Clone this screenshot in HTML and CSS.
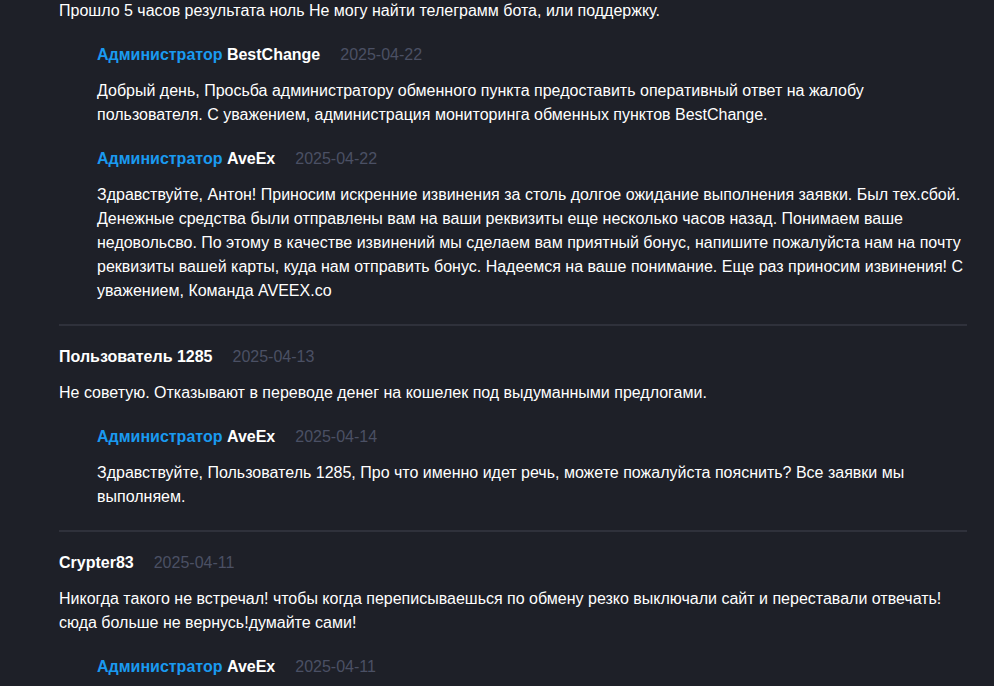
FILE: index.html
```html
<!DOCTYPE html>
<html lang="ru">
<head>
    <meta charset="UTF-8">
    <meta name="viewport" content="width=device-width, initial-scale=1.0">
    <title>Отзывы</title>
    <link rel="stylesheet" href="styles.css">
</head>
<body>
    <div class="reviews">
        <div class="comment first">
            <p class="comment-text">Прошло 5 часов результата ноль Не могу найти телеграмм бота, или поддержку.</p>
            <div class="reply">
                <div class="comment-head">
                    <span class="name"><span class="role">Администратор</span> BestChange</span>
                    <span class="date">2025-04-22</span>
                </div>
                <p class="comment-text">Добрый день, Просьба администратору обменного пункта предоставить оперативный ответ на жалобу пользователя. С уважением, администрация мониторинга обменных пунктов BestChange.</p>
            </div>
            <div class="reply">
                <div class="comment-head">
                    <span class="name"><span class="role">Администратор</span> AveEx</span>
                    <span class="date">2025-04-22</span>
                </div>
                <p class="comment-text">Здравствуйте, Антон! Приносим искренние извинения за столь долгое ожидание выполнения заявки. Был тех.сбой. Денежные средства были отправлены вам на ваши реквизиты еще несколько часов назад. Понимаем ваше недовольсво. По этому в качестве извинений мы сделаем вам приятный бонус, напишите пожалуйста нам на почту реквизиты вашей карты, куда нам отправить бонус. Надеемся на ваше понимание. Еще раз приносим извинения! С уважением, Команда AVEEX.co</p>
            </div>
        </div>

        <div class="comment">
            <div class="comment-head">
                <span class="name">Пользователь 1285</span>
                <span class="date">2025-04-13</span>
            </div>
            <p class="comment-text">Не советую. Отказывают в переводе денег на кошелек под выдуманными предлогами.</p>
            <div class="reply">
                <div class="comment-head">
                    <span class="name"><span class="role">Администратор</span> AveEx</span>
                    <span class="date">2025-04-14</span>
                </div>
                <p class="comment-text">Здравствуйте, Пользователь 1285, Про что именно идет речь, можете пожалуйста пояснить? Все заявки мы выполняем.</p>
            </div>
        </div>

        <div class="comment">
            <div class="comment-head">
                <span class="name">Crypter83</span>
                <span class="date">2025-04-11</span>
            </div>
            <p class="comment-text">Никогда такого не встречал! чтобы когда переписываешься по обмену резко выключали сайт и переставали отвечать! сюда больше не вернусь!думайте сами!</p>
            <div class="reply">
                <div class="comment-head">
                    <span class="name"><span class="role">Администратор</span> AveEx</span>
                    <span class="date">2025-04-11</span>
                </div>
            </div>
        </div>
    </div>
</body>
</html>
```

FILE: styles.css
```css
body {
    font-family: "Liberation Sans", Arial, sans-serif;
    font-size: 16px;
    line-height: 24px;
    margin: 0;
    padding: 0;
    background-color: #1e2028;
    color: #fff;
    overflow: hidden;
}

.reviews {
    width: 908px;
    margin-left: 59px;
    margin-top: -1px;
}

.comment {
    padding: 19px 0 21px;
    border-top: 2px solid #2f313b;
}

.comment.first {
    padding-top: 0;
    border-top: none;
}

.comment-head {
    display: flex;
    align-items: baseline;
    margin-bottom: 12px;
}

.name {
    font-weight: 700;
    color: #fff;
}

.role {
    color: #1a9af0;
}

.date {
    margin-left: 20px;
    color: #4b5064;
}

.comment-text {
    margin: 0;
}

.reply {
    margin-left: 38px;
    margin-top: 20px;
}
```
